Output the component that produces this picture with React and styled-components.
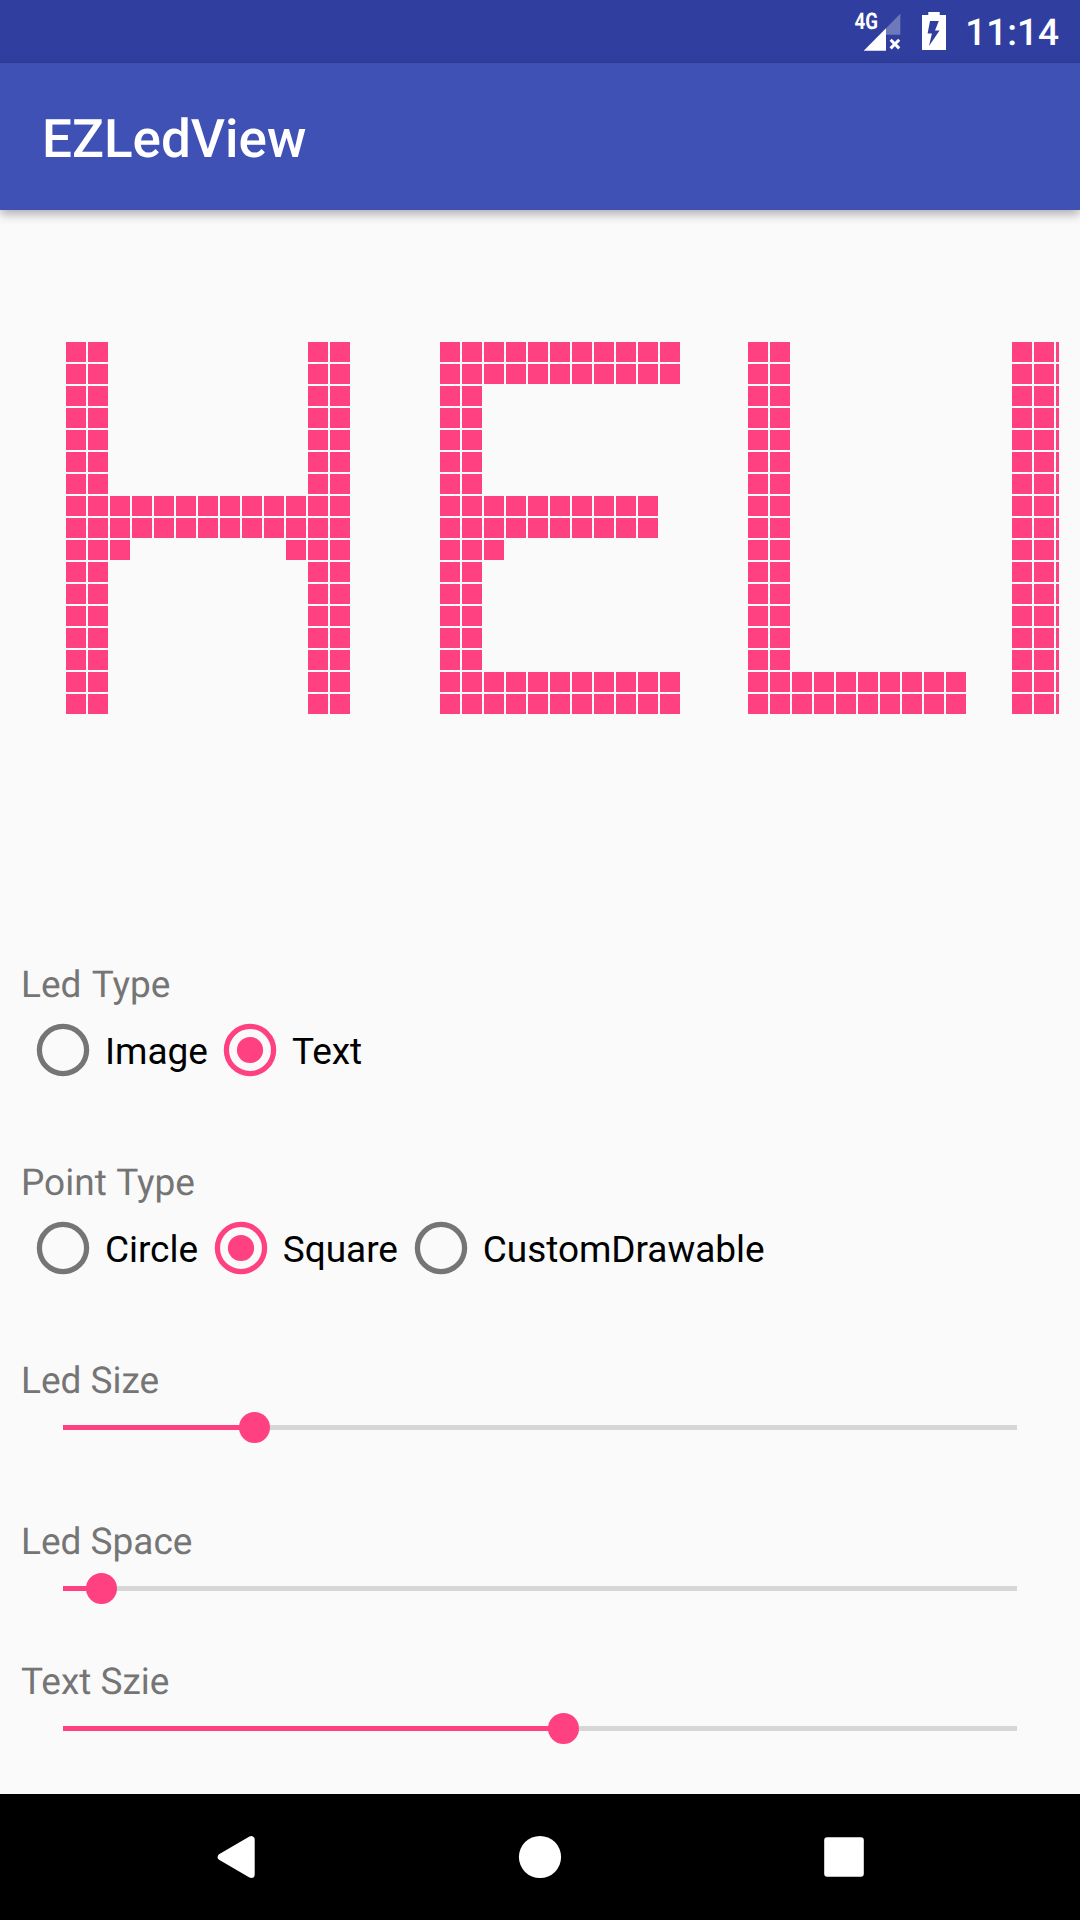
import React, { useState } from "react";
import styled, { createGlobalStyle } from "styled-components";

const color = {
  primary: "#3f51b5",
  primaryDark: "#303f9f",
  accent: "#ff4081",
  background: "#fafafa",
  label: "#757575",
  track: "#d6d6d6",
};

const GlobalStyle = createGlobalStyle`
  * { box-sizing: border-box; }
  body {
    margin: 0;
    background: ${color.background};
    font-family: Roboto, "Noto Sans", sans-serif;
    text-rendering: geometricPrecision;
  }
`;

const Screen = styled.div`
  display: flex;
  flex-direction: column;
  width: 1080px;
  height: 1920px;
  overflow: hidden;
  background: ${color.background};
`;

const StatusBar = styled.header`
  display: flex;
  flex: none;
  justify-content: flex-end;
  height: 63px;
  padding-right: 21px;
  background: ${color.primaryDark};
  color: #fff;
`;

const StatusIcon = styled.svg`
  display: block;
  flex: none;
  height: 63px;
  margin-right: ${(p) => p.$gap}px;
  fill: #fff;
`;

const NetworkText = styled.text`
  font-size: 23px;
  font-weight: 700;
`;

const Clock = styled.time`
  height: 63px;
  font-size: 37px;
  font-weight: 500;
  line-height: 67px;
`;

const AppBar = styled.div`
  display: flex;
  flex: none;
  align-items: center;
  height: 147px;
  padding: 4px 42px 0;
  background: ${color.primary};
  box-shadow: 0 4px 10px rgba(0, 0, 0, 0.32);
`;

const Title = styled.h1`
  margin: 0;
  color: #fff;
  font-size: 53px;
  font-weight: 500;
  line-height: 62px;
`;

const Content = styled.main`
  display: flex;
  flex: 1;
  flex-direction: column;
  padding: 0 21px;
`;

const LedView = styled.section`
  display: flex;
  flex: none;
  height: 750px;
  padding: 132px 0 0 45px;
  overflow: hidden;
`;

const Glyph = styled.div`
  display: grid;
  flex: none;
  grid-template-columns: repeat(${(p) => p.$columns}, 20px);
  grid-auto-rows: 20px;
  align-content: start;
  gap: 2px;
  margin-right: ${(p) => p.$after * 22 + 2}px;
`;

const Led = styled.i`
  background: ${(p) => (p.$on ? color.accent : "transparent")};
`;

const Field = styled.section`
  flex: none;
  margin-bottom: ${(p) => p.$after}px;
`;

const Label = styled.h2`
  height: 48px;
  margin: 0;
  color: ${color.label};
  font-size: 37px;
  font-weight: 400;
  line-height: 51px;
  word-spacing: ${(p) => p.$wordSpacing || 0}px;
`;

const RadioGroup = styled.div`
  display: flex;
  gap: ${(p) => p.$gap}px;
  height: 84px;
`;

const RadioOption = styled.button`
  display: flex;
  align-items: center;
  padding: 0;
  border: 0;
  background: none;
  color: #000;
  font: 400 37px / 48px Roboto, "Noto Sans", sans-serif;
`;

const RadioDial = styled.svg`
  display: block;
  width: 84px;
  height: 84px;
  color: ${(p) => (p.$checked ? color.accent : color.label)};
`;

const RadioText = styled.span`
  padding-top: 3px;
  letter-spacing: -0.05px;
`;

const Slider = styled.div`
  display: flex;
  align-items: center;
  height: 47px;
  margin: 0 42px;
`;

const Progress = styled.div`
  height: 5px;
  background: ${color.accent};
`;

const Thumb = styled.div`
  flex: none;
  width: 31.5px;
  height: 31.5px;
  margin: 0 -15.75px;
  border-radius: 50%;
  background: ${color.accent};
  z-index: 1;
`;

const Track = styled.div`
  flex: 1;
  height: 5px;
  background: ${color.track};
`;

const NavBar = styled.nav`
  display: flex;
  flex: none;
  justify-content: center;
  height: 126px;
  background: #000;
`;

const NavButton = styled.button`
  display: flex;
  align-items: center;
  justify-content: center;
  width: 304px;
  padding: 0;
  border: 0;
  background: none;
`;

const NavIcon = styled.svg`
  width: 84px;
  height: 84px;
  fill: #fff;
  stroke: #fff;
  stroke-linejoin: round;
`;

const repeat = (row, n) => Array(n).fill(row);

const glyphs = [
  {
    after: 4,
    rows: [
      ...repeat("##.........##", 7),
      ...repeat("#############", 2),
      "###.......###",
      ...repeat("##.........##", 7),
    ],
  },
  {
    after: 3,
    rows: [
      ...repeat("###########", 2),
      ...repeat("##.........", 5),
      ...repeat("##########.", 2),
      "###........",
      ...repeat("##.........", 5),
      ...repeat("###########", 2),
    ],
  },
  {
    after: 2,
    rows: [...repeat("##........", 15), ...repeat("##########", 2)],
  },
  { after: 0, rows: repeat("###", 17) },
];

function LedGlyph({ rows, after }) {
  return (
    <Glyph $columns={rows[0].length} $after={after}>
      {rows.join("").split("").map((cell, i) => (
        <Led key={i} $on={cell === "#"} />
      ))}
    </Glyph>
  );
}

function Radios({ options, initial, gap = 0 }) {
  const [value, setValue] = useState(initial);
  return (
    <RadioGroup role="radiogroup" $gap={gap}>
      {options.map((option) => {
        const checked = option === value;
        return (
          <RadioOption
            key={option}
            role="radio"
            aria-checked={checked}
            onClick={() => setValue(option)}
          >
            <RadioDial $checked={checked} viewBox="0 0 84 84">
              <circle cx="42" cy="42" r="23.6" fill="none" stroke="currentColor" strokeWidth="5.25" />
              {checked && <circle cx="42" cy="42" r="13.1" fill="currentColor" />}
            </RadioDial>
            <RadioText>{option}</RadioText>
          </RadioOption>
        );
      })}
    </RadioGroup>
  );
}

function SeekBar({ percent }) {
  return (
    <Slider>
      <Progress style={{ width: `${percent}%` }} />
      <Thumb />
      <Track />
    </Slider>
  );
}

export default function App() {
  return (
    <Screen>
      <GlobalStyle />
      <StatusBar>
        <StatusIcon width="47" viewBox="854 0 47 63" $gap={21}>
          <NetworkText x="854.6" y="29.3" textLength="23.4" lengthAdjust="spacingAndGlyphs">
            4G
          </NetworkText>
          <path d="M863.7 50.7H886V28.2z" />
          <path d="M886 28.2L900.3 13.7V34.7H886z" opacity=".3" />
          <path d="M890.6 39.8l8.6 8.6m0-8.6l-8.6 8.6" stroke="#fff" strokeWidth="3" />
        </StatusIcon>
        <StatusIcon width="24" viewBox="922 0 24 63" $gap={19.5}>
          <path
            fillRule="evenodd"
            d="M928.3 12h11.4v3H946v35h-24V15h6.3zM930 21l-2.4 12.5h4.3L929 46l10.6-15.5h-4.6l3.8-9.5z"
          />
        </StatusIcon>
        <Clock>11:14</Clock>
      </StatusBar>
      <AppBar>
        <Title>EZLedView</Title>
      </AppBar>
      <Content>
        <LedView aria-label="HELLO">
          {glyphs.map((glyph, i) => (
            <LedGlyph key={i} {...glyph} />
          ))}
        </LedView>
        <Field $after={66}>
          <Label $wordSpacing={1.8}>Led Type</Label>
          <Radios options={["Image", "Text"]} initial="Text" gap={0.2} />
        </Field>
        <Field $after={66}>
          <Label $wordSpacing={1}>Point Type</Label>
          <Radios options={["Circle", "Square", "CustomDrawable"]} initial="Square" gap={0.9} />
        </Field>
        <Field $after={66}>
          <Label>Led Size</Label>
          <SeekBar percent={20.06} />
        </Field>
        <Field $after={45}>
          <Label>Led Space</Label>
          <SeekBar percent={4.03} />
        </Field>
        <Field $after={0}>
          <Label>Text Szie</Label>
          <SeekBar percent={52.45} />
        </Field>
      </Content>
      <NavBar>
        <NavButton aria-label="Back">
          <NavIcon viewBox="0 0 84 84">
            <path d="M57.2 24.6V59.4L27.2 42z" strokeWidth="7" />
          </NavIcon>
        </NavButton>
        <NavButton aria-label="Home">
          <NavIcon viewBox="0 0 84 84">
            <circle cx="42" cy="42" r="21.1" stroke="none" />
          </NavIcon>
        </NavButton>
        <NavButton aria-label="Recents">
          <NavIcon viewBox="0 0 84 84">
            <rect x="22.2" y="22.2" width="39.6" height="39.6" rx="3" stroke="none" />
          </NavIcon>
        </NavButton>
      </NavBar>
    </Screen>
  );
}
